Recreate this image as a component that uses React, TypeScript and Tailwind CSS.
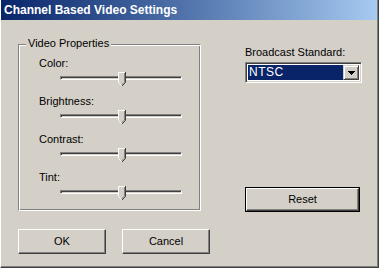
import React from "react";

const font = { fontFamily: '"Liberation Sans", Arial, sans-serif' };

function Thumb() {
  return (
    <svg width="8" height="14" viewBox="0 0 8 14" className="absolute left-[58px] top-[2px]" shapeRendering="crispEdges">
      <polygon points="0,0 7,0 7,10 4,13 3,13 0,10" fill="#d4d0c8" />
      <path d="M0.5 10 V0.5 H6.5" stroke="#ffffff" fill="none" />
      <path d="M7.5 0 V10.5 L4 14" stroke="#404040" fill="none" shapeRendering="auto" />
      <path d="M6.5 1 V10 L3.5 13" stroke="#808080" fill="none" shapeRendering="auto" />
      <path d="M0.5 10.5 L3.5 13.5" stroke="#ffffff" fill="none" shapeRendering="auto" />
    </svg>
  );
}

function Slider() {
  return (
    <div className="relative ml-[41px] w-[122px] h-[17px]">
      <div className="absolute left-0 top-[6px] w-[122px] h-[4px] border-t border-l border-[#808080] border-r-white border-b-white border-r border-b shadow-[inset_1px_1px_0_#404040,inset_-1px_-1px_0_#d4d0c8]" />
      <Thumb />
    </div>
  );
}

function Row({ label, gap }: { label: string; gap: number }) {
  return (
    <div style={{ marginTop: gap }}>
      <div className="ml-[20px] h-[13px] leading-[13px] text-[11px] text-black">{label}</div>
      <Slider />
    </div>
  );
}

function Button({ label, className, def }: { label: string; className: string; def?: boolean }) {
  if (def) {
    return (
      <div className={"border border-black " + className}>
        <div className="w-full h-full border-t border-l border-white border-r border-b border-r-[#404040] border-b-[#404040] shadow-[inset_-1px_-1px_0_#808080] flex items-center justify-center text-[11px] text-black">
          {label}
        </div>
      </div>
    );
  }
  return (
    <div className={"shrink-0 border-t border-l border-white border-r border-b border-r-[#404040] border-b-[#404040] shadow-[inset_-1px_-1px_0_#808080] flex items-center justify-center text-[11px] text-black " + className}>
      {label}
    </div>
  );
}

export default function App() {
  return (
    <div className="w-[379px] h-[268px] bg-[#d4d0c8] flex flex-col border-l border-l-white border-r border-r-[#404040] border-b border-b-[#404040] shadow-[inset_-1px_-1px_0_#808080]" style={font}>
      <div className="h-[20px] mr-[1px] bg-gradient-to-r from-[#0a246a] to-[#a6caf0] flex items-center pl-[3px]">
        <span className="text-white font-bold text-[12px] leading-[20px]">Channel Based Video Settings</span>
      </div>
      <div className="flex flex-row">
        <div className="ml-[17px] w-[183px] shrink-0 flex flex-col">
          <div className="relative mt-[24px] w-[183px] h-[167px] border-t border-l border-[#808080] border-r border-b border-r-white border-b-white shadow-[inset_1px_1px_0_#ffffff,inset_-1px_-1px_0_#808080]">
            <div className="absolute left-[7px] top-[-8px] px-[2px] bg-[#d4d0c8] text-[11px] leading-[13px] text-black">Video Properties</div>
            <Row label="Color:" gap={12} />
            <Row label="Brightness:" gap={8} />
            <Row label="Contrast:" gap={8} />
            <Row label="Tint:" gap={8} />
          </div>
          <div className="flex flex-row mt-[18px]">
            <Button label="OK" className="w-[88px] h-[25px]" />
            <Button label="Cancel" className="ml-[16px] w-[88px] h-[25px]" />
          </div>
        </div>
        <div className="ml-[44px] flex flex-col">
          <div className="mt-[26px] h-[13px] leading-[13px] text-[11px] text-black">Broadcast Standard:</div>
          <div className="mt-[3px] w-[117px] h-[21px] border-t border-l border-[#808080] border-r border-b border-r-white border-b-white shadow-[inset_1px_1px_0_#404040,inset_-1px_-1px_0_#d4d0c8] p-[2px] flex flex-row bg-white">
            <div className="flex-1 bg-[#0a246a] text-white text-[12px] leading-[15px] pl-[1px] tracking-[0.5px]">NTSC</div>
            <div className="w-[16px] h-[15px] bg-[#d4d0c8] border-t border-l border-[#d4d0c8] border-r border-b border-r-[#404040] border-b-[#404040] shadow-[inset_1px_1px_0_#ffffff,inset_-1px_-1px_0_#808080] flex items-center justify-center">
              <svg width="7" height="4" viewBox="0 0 7 4" shapeRendering="crispEdges">
                <path d="M0 0H7V1H6V2H5V3H4V4H3V3H2V2H1V1H0Z" fill="#000" />
              </svg>
            </div>
          </div>
          <Button label="Reset" def className="mt-[104px] w-[115px] h-[25px]" />
        </div>
      </div>
    </div>
  );
}
